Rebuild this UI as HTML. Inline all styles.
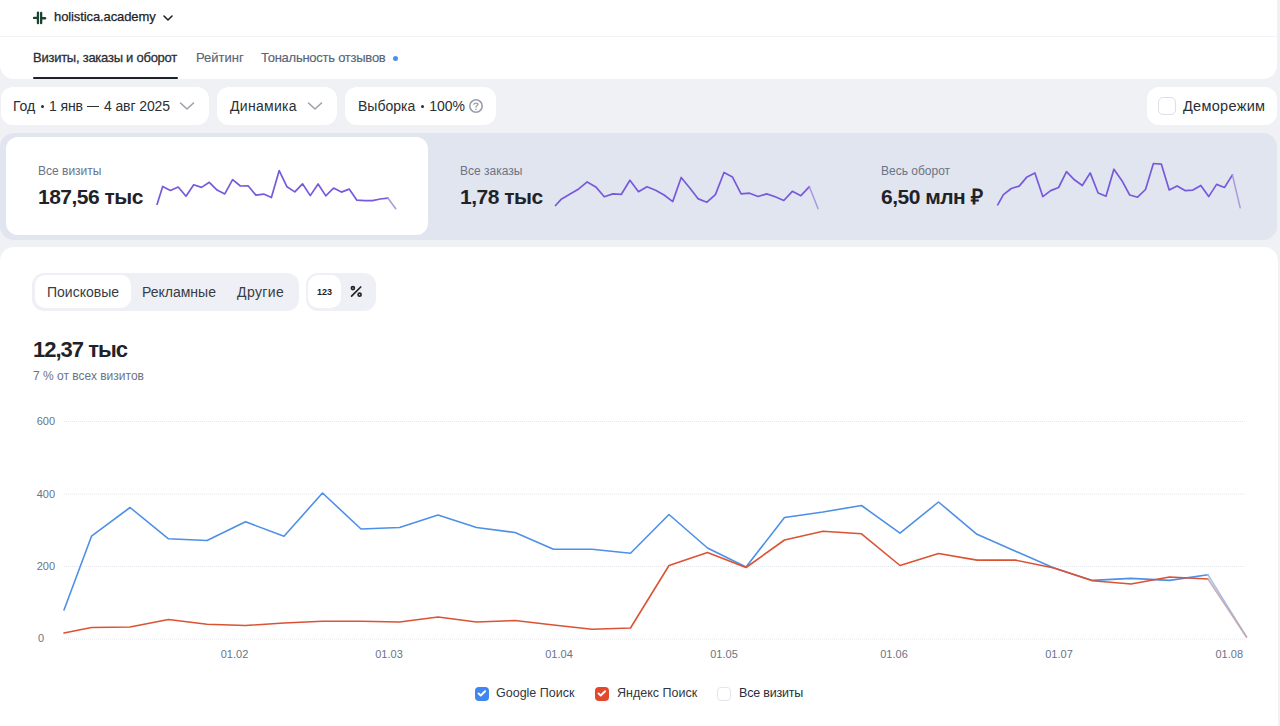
<!DOCTYPE html>
<html><head><meta charset="utf-8">
<style>
*{box-sizing:border-box;margin:0;padding:0}
html,body{width:1280px;height:726px;overflow:hidden;background:#eff1f5;font-family:"Liberation Sans",sans-serif;color:#1f2329}
.abs{position:absolute}
.t{position:absolute;white-space:nowrap;line-height:1}
.card{position:absolute;background:#fff}
</style></head><body>
<!-- header card -->
<div class="card" style="left:0;top:-20px;width:1277px;height:99px;border-radius:14px"></div>
<div class="abs" style="left:0;top:36px;width:1277px;height:1px;background:#f1f3f7"></div>
<svg class="abs" style="left:32px;top:10px" width="15" height="15" viewBox="0 0 15 15">
  <g fill="#1c4232">
    <rect x="4.8" y="1.5" width="2.3" height="12.8" rx="1.1"/>
    <rect x="8.0" y="1.8" width="2.3" height="12.5" rx="1.1"/>
    <rect x="0.9" y="6.7" width="5" height="2.4" rx="1.2"/>
    <rect x="9.2" y="7.0" width="5" height="2.4" rx="1.2"/>
  </g>
</svg>
<div class="t" style="left:54px;top:10px;font-size:13px;color:#1f2329;-webkit-text-stroke:0.25px #1f2329;letter-spacing:-0.1px">holistica.academy</div>
<svg class="abs" style="left:162px;top:14px" width="12" height="8" viewBox="0 0 12 8"><path d="M2 2 L6 6 L10 2" fill="none" stroke="#222" stroke-width="1.6" stroke-linecap="round" stroke-linejoin="round"/></svg>

<div class="t" style="left:33px;top:51px;font-size:13px;color:#2a2e35;-webkit-text-stroke:0.28px #2a2e35;letter-spacing:-0.25px">Визиты, заказы и оборот</div>
<div class="abs" style="left:33px;top:77px;width:145px;height:2px;background:#1f2329;border-radius:1px"></div>
<div class="t" style="left:196px;top:51px;font-size:13px;color:#5a6477;-webkit-text-stroke:0.15px #5a6477">Рейтинг</div>
<div class="t" style="left:261px;top:51px;font-size:13px;color:#5a6477;letter-spacing:-0.25px;-webkit-text-stroke:0.15px #5a6477">Тональность отзывов</div>
<div class="abs" style="left:393px;top:56px;width:5px;height:5px;border-radius:3px;background:#4d8ef0"></div>

<!-- filter buttons -->
<div class="card" style="left:1px;top:87px;width:208px;height:38px;border-radius:12px"></div>
<div class="t" style="left:13px;top:99px;font-size:14px;color:#2a2e35;letter-spacing:-0.1px">Год<span style="display:inline-block;width:3px;height:3px;border-radius:2px;background:#2a2e35;vertical-align:3px;margin:0 5px 0 6px"></span>1 янв<span style="display:inline-block;width:12px;height:1px;background:#2a2e35;vertical-align:4.5px;margin:0 5px 0 4px"></span>4 авг 2025</div>
<svg class="abs" style="left:179px;top:101px" width="16" height="10" viewBox="0 0 16 10"><path d="M1.5 2 L8 8 L14.5 2" fill="none" stroke="#9aa0ab" stroke-width="1.5" stroke-linecap="round" stroke-linejoin="round"/></svg>
<div class="card" style="left:217px;top:87px;width:120px;height:38px;border-radius:12px"></div>
<div class="t" style="left:230px;top:99px;font-size:14px;color:#2a2e35;letter-spacing:0.3px">Динамика</div>
<svg class="abs" style="left:307px;top:101px" width="16" height="10" viewBox="0 0 16 10"><path d="M1.5 2 L8 8 L14.5 2" fill="none" stroke="#9aa0ab" stroke-width="1.5" stroke-linecap="round" stroke-linejoin="round"/></svg>
<div class="card" style="left:345px;top:87px;width:151px;height:38px;border-radius:12px"></div>
<div class="t" style="left:358px;top:99px;font-size:14px;color:#2a2e35">Выборка<span style="display:inline-block;width:3px;height:3px;border-radius:2px;background:#2a2e35;vertical-align:3px;margin:0 5px 0 6px"></span>100%</div>
<svg class="abs" style="left:468px;top:98px" width="16" height="16" viewBox="0 0 16 16"><circle cx="8" cy="8" r="6.2" fill="none" stroke="#9aa0ab" stroke-width="1.6"/><path d="M6 6.3 C6 4.6 10 4.6 10 6.3 C10 7.6 8 7.6 8 9.2" fill="none" stroke="#9aa0ab" stroke-width="1.3" stroke-linecap="round"/><circle cx="8" cy="11.3" r="0.8" fill="#9aa0ab"/></svg>

<div class="card" style="left:1147px;top:87px;width:130px;height:38px;border-radius:12px"></div>
<div class="abs" style="left:1158px;top:97px;width:18px;height:18px;border:1px solid #dcdfe5;border-radius:5px;background:#fff"></div>
<div class="t" style="left:1183px;top:98.5px;font-size:14.5px;color:#2a2e35;letter-spacing:0.3px">Деморежим</div>

<!-- KPI band -->
<div class="abs" style="left:0;top:133px;width:1277px;height:107px;border-radius:14px;background:#e1e5ef"></div>
<div class="card" style="left:6px;top:137px;width:422px;height:98px;border-radius:12px"></div>
<div class="t" style="left:38px;top:165px;font-size:12px;color:#6b7384">Все визиты</div>
<div class="t" style="left:38px;top:186px;font-size:21px;font-weight:700;color:#1f2329;letter-spacing:-0.5px">187,56 тыс</div>
<div class="t" style="left:460px;top:165px;font-size:12px;color:#6b7384">Все заказы</div>
<div class="t" style="left:460px;top:186px;font-size:21px;font-weight:700;color:#1f2329;letter-spacing:-0.5px">1,78 тыс</div>
<div class="t" style="left:881px;top:165px;font-size:12px;color:#6b7384">Весь оборот</div>
<div class="t" style="left:881px;top:186px;font-size:21px;font-weight:700;color:#1f2329;letter-spacing:-0.5px">6,50 млн ₽</div>
<svg class="abs" style="left:0;top:0" width="1280" height="250" viewBox="0 0 1280 250">
  <g fill="none" stroke="#7759dc" stroke-width="1.7" stroke-linejoin="round" stroke-linecap="round">
    <path d="M157.1 204.3 L162.7 186.4 L170.4 190.5 L178.2 187.0 L186.0 196.2 L193.7 184.8 L201.5 187.4 L209.3 182.3 L217.1 190.1 L224.8 193.9 L232.6 179.7 L240.4 186.0 L248.1 185.8 L255.9 195.1 L263.7 194.1 L271.4 197.6 L279.2 170.6 L287.0 186.8 L294.8 191.9 L302.5 183.8 L310.3 195.6 L318.1 184.0 L325.8 195.9 L333.6 188.0 L341.4 192.1 L349.2 189.1 L356.9 200.2 L364.7 200.6 L372.5 200.6 L380.2 199.0 L388.0 198.2"/><path d="M555.5 205.5 L561.6 198.9 L570.1 193.9 L578.7 188.9 L587.2 181.9 L595.8 186.9 L604.3 196.8 L612.9 193.9 L621.4 194.3 L629.9 180.3 L638.5 191.7 L647.0 186.7 L655.6 190.2 L664.1 195.0 L672.7 201.6 L681.2 177.5 L689.8 188.0 L698.3 198.9 L706.9 202.2 L715.4 194.6 L724.0 172.5 L732.5 177.1 L741.1 193.9 L749.6 193.2 L758.1 196.5 L766.7 193.9 L775.2 196.8 L783.8 200.5 L792.3 191.3 L800.9 195.7 L809.4 186.7"/><path d="M997.7 204.8 L1003.4 194.6 L1011.3 188.5 L1019.2 186.1 L1027.0 176.9 L1034.9 172.9 L1042.8 196.6 L1050.7 190.6 L1058.6 187.5 L1066.5 171.7 L1074.4 179.8 L1082.3 185.5 L1090.2 172.9 L1098.1 193.0 L1106.0 196.2 L1113.9 169.2 L1121.8 180.4 L1129.7 195.0 L1137.6 197.2 L1145.5 189.5 L1153.4 163.5 L1161.3 164.1 L1169.2 189.9 L1177.1 185.9 L1185.0 190.6 L1192.9 190.1 L1200.8 185.5 L1208.7 196.6 L1216.6 184.4 L1224.5 187.5 L1232.4 174.9"/>
  </g>
  <g fill="none" stroke="#a898e2" stroke-width="1.5" stroke-linecap="round">
    <path d="M388.0 198.2 L395.8 208.8"/><path d="M809.4 186.7 L818.0 208.6"/><path d="M1232.4 174.9 L1240.2 207.8"/>
  </g>
</svg>

<!-- main card -->
<div class="card" style="left:0;top:247px;width:1278px;height:520px;border-radius:14px"></div>
<div class="abs" style="left:32px;top:273px;width:267px;height:38px;border-radius:12px;background:#eef0f5"></div>
<div class="abs" style="left:35px;top:275px;width:96px;height:33px;border-radius:10px;background:#fff"></div>
<div class="t" style="left:47px;top:285px;font-size:14px;color:#383c44">Поисковые</div>
<div class="t" style="left:142px;top:285px;font-size:14px;color:#383c44">Рекламные</div>
<div class="t" style="left:237px;top:285px;font-size:14px;color:#383c44;letter-spacing:0.4px">Другие</div>
<div class="abs" style="left:306px;top:273px;width:70px;height:38px;border-radius:12px;background:#eef0f5"></div>
<div class="abs" style="left:308px;top:275px;width:33px;height:33px;border-radius:10px;background:#fff"></div>
<div class="t" style="left:317px;top:288px;font-size:9px;font-weight:700;color:#1f2329">123</div>
<svg class="abs" style="left:348px;top:284px" width="16" height="16" viewBox="348 284 16 16"><g fill="none" stroke="#1f2329" stroke-width="1.7" stroke-linecap="round"><line x1="351.6" y1="296.2" x2="360.7" y2="287.0"/><circle cx="352.9" cy="288.1" r="1.5"/><circle cx="359.6" cy="294.7" r="1.5"/></g></svg>

<div class="t" style="left:33px;top:339px;font-size:22px;font-weight:700;color:#1f2329;letter-spacing:-1px">12,37 тыс</div>
<div class="t" style="left:33px;top:370px;font-size:12px;color:#6b7384">7 % от всех визитов</div>

<!-- chart -->
<svg class="abs" style="left:0;top:0" width="1280" height="726" viewBox="0 0 1280 726">
  <g stroke="#e4e6eb" stroke-width="1" stroke-dasharray="1 1">
    <line x1="64" y1="421.5" x2="1246" y2="421.5"/>
    <line x1="64" y1="494" x2="1246" y2="494"/>
    <line x1="64" y1="566.5" x2="1246" y2="566.5"/>
    <line x1="64" y1="639" x2="1246" y2="639"/>
  </g>
  <g font-family="Liberation Sans" font-size="11" fill="#6b7384">
    <text x="55" y="425" text-anchor="end">600</text>
    <text x="55" y="498" text-anchor="end">400</text>
    <text x="55" y="570" text-anchor="end">200</text>
    <text x="44" y="642" text-anchor="end">0</text>
    <text x="234.5" y="658" text-anchor="middle">01.02</text>
    <text x="389" y="658" text-anchor="middle">01.03</text>
    <text x="559" y="658" text-anchor="middle">01.04</text>
    <text x="724" y="658" text-anchor="middle">01.05</text>
    <text x="894" y="658" text-anchor="middle">01.06</text>
    <text x="1059" y="658" text-anchor="middle">01.07</text>
    <text x="1243" y="658" text-anchor="end">01.08</text>
  </g>
  <g fill="none" stroke-width="1.6" stroke-linejoin="round" stroke-linecap="round">
    <path d="M64.0 610.0 L91.5 536.2 L130.0 507.5 L168.5 538.8 L207.0 540.5 L245.5 521.8 L284.0 536.2 L322.5 493.0 L361.0 529.0 L399.5 527.5 L438.0 515.0 L476.5 527.5 L515.0 532.5 L553.5 549.2 L592.0 549.2 L630.5 553.2 L669.0 514.5 L707.5 548.0 L746.0 567.0 L784.5 517.5 L823.0 512.0 L861.5 505.5 L900.0 533.2 L938.5 502.0 L977.0 534.3 L1015.5 551.2 L1054.0 568.0 L1092.5 580.4 L1131.0 578.4 L1169.5 580.4 L1208.0 574.8" stroke="#4d90e6"/>
    <path d="M64.0 633.0 L91.5 627.5 L130.0 627.0 L168.5 619.5 L207.0 624.2 L245.5 625.5 L284.0 623.0 L322.5 621.2 L361.0 621.2 L399.5 622.0 L438.0 617.0 L476.5 622.0 L515.0 620.5 L553.5 625.0 L592.0 629.2 L630.5 628.0 L669.0 565.5 L707.5 552.5 L746.0 567.5 L784.5 540.0 L823.0 531.2 L861.5 533.8 L900.0 565.5 L938.5 553.5 L977.0 560.1 L1015.5 560.1 L1054.0 568.0 L1092.5 580.7 L1131.0 584.0 L1169.5 577.0 L1208.0 579.0" stroke="#dc5234"/>
    <path d="M1208.0 574.8 L1246.5 637.0" stroke="#a9c0e6"/>
    <path d="M1208.0 579.0 L1246.5 637.0" stroke="#c4a5a8" opacity="0.9"/>
  </g>
</svg>

<!-- legend -->
<div class="abs" style="left:475px;top:687px;width:14px;height:14px;border-radius:4px;background:#3f86f0"></div>
<svg class="abs" style="left:475px;top:687px" width="14" height="14" viewBox="0 0 14 14"><path d="M3.5 6.4 L5.7 8.5 L10.1 4.2" fill="none" stroke="#fff" stroke-width="1.9" stroke-linecap="round" stroke-linejoin="round"/></svg>
<div class="t" style="left:496px;top:687px;font-size:12.5px;color:#32363e">Google Поиск</div>
<div class="abs" style="left:595px;top:687px;width:14px;height:14px;border-radius:4px;background:#e4472a"></div>
<svg class="abs" style="left:595px;top:687px" width="14" height="14" viewBox="0 0 14 14"><path d="M3.5 6.4 L5.7 8.5 L10.1 4.2" fill="none" stroke="#fff" stroke-width="1.9" stroke-linecap="round" stroke-linejoin="round"/></svg>
<div class="t" style="left:617px;top:687px;font-size:12.5px;color:#32363e">Яндекс Поиск</div>
<div class="abs" style="left:717px;top:687px;width:14px;height:14px;border-radius:4px;border:1px solid #e3e6eb;background:#fff"></div>
<div class="t" style="left:739px;top:687px;font-size:12.5px;color:#2a2e35;letter-spacing:-0.2px">Все визиты</div>
</body></html>
